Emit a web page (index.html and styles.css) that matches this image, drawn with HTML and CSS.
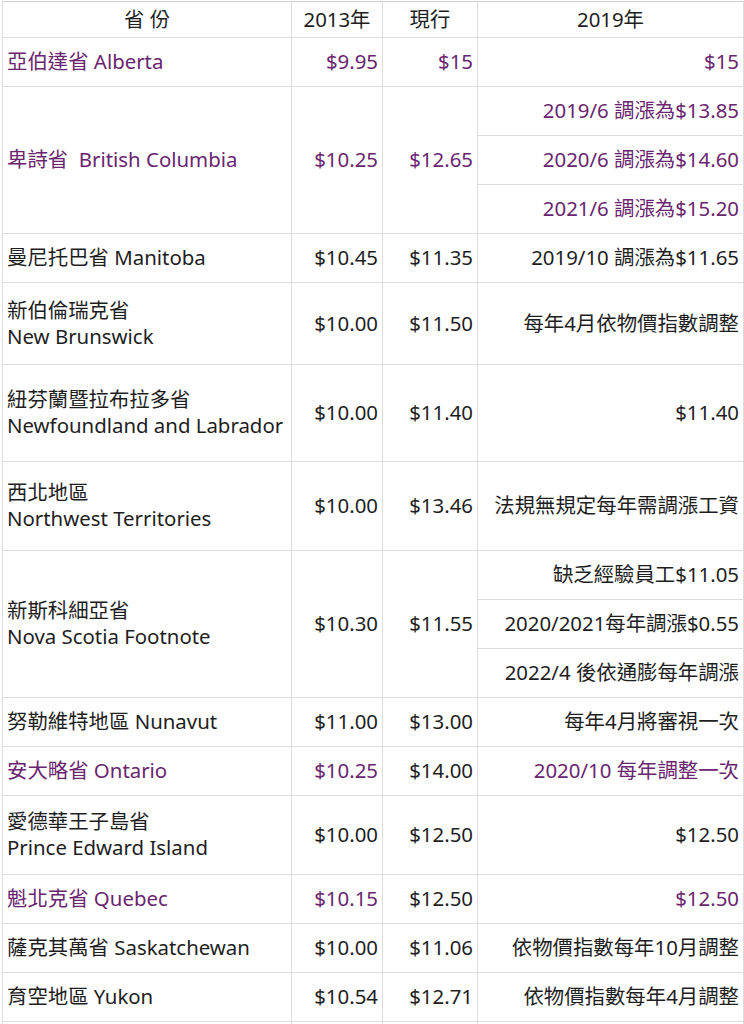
FILE: index.html
```html
<!DOCTYPE html>
<html lang="zh-Hant">
<head>
<meta charset="utf-8">
<link rel="stylesheet" href="styles.css">
</head>
<body>
<table class="wage">
  <colgroup>
    <col class="c1"><col class="c2"><col class="c3"><col class="c4">
  </colgroup>
  <tr class="head">
    <th>省 份</th><th>2013年</th><th>現行</th><th>2019年</th>
  </tr>
  <tr class="r49 p">
    <td class="name">亞伯達省 Alberta</td><td class="num">$9.95</td><td class="num">$15</td><td class="num">$15</td>
  </tr>
  <tr class="r49 p">
    <td class="name" rowspan="3">卑詩省&nbsp; British Columbia</td><td class="num" rowspan="3">$10.25</td><td class="num" rowspan="3">$12.65</td><td class="num">2019/6 調漲為$13.85</td>
  </tr>
  <tr class="r49 p"><td class="num">2020/6 調漲為$14.60</td></tr>
  <tr class="r49 p"><td class="num">2021/6 調漲為$15.20</td></tr>
  <tr class="r49">
    <td class="name">曼尼托巴省 Manitoba</td><td class="num">$10.45</td><td class="num">$11.35</td><td class="num">2019/10 調漲為$11.65</td>
  </tr>
  <tr class="r82">
    <td class="name">新伯倫瑞克省<br>New Brunswick</td><td class="num">$10.00</td><td class="num">$11.50</td><td class="num">每年4月依物價指數調整</td>
  </tr>
  <tr class="r97">
    <td class="name">紐芬蘭暨拉布拉多省<br>Newfoundland and Labrador</td><td class="num">$10.00</td><td class="num">$11.40</td><td class="num">$11.40</td>
  </tr>
  <tr class="r89">
    <td class="name">西北地區<br>Northwest Territories</td><td class="num">$10.00</td><td class="num">$13.46</td><td class="num">法規無規定每年需調漲工資</td>
  </tr>
  <tr class="r49">
    <td class="name" rowspan="3">新斯科細亞省<br>Nova Scotia Footnote</td><td class="num" rowspan="3">$10.30</td><td class="num" rowspan="3">$11.55</td><td class="num">缺乏經驗員工$11.05</td>
  </tr>
  <tr class="r49"><td class="num">2020/2021每年調漲$0.55</td></tr>
  <tr class="r49"><td class="num">2022/4 後依通膨每年調漲</td></tr>
  <tr class="r49">
    <td class="name">努勒維特地區 Nunavut</td><td class="num">$11.00</td><td class="num">$13.00</td><td class="num">每年4月將審視一次</td>
  </tr>
  <tr class="r49">
    <td class="name purple">安大略省 Ontario</td><td class="num purple">$10.25</td><td class="num">$14.00</td><td class="num purple">2020/10 每年調整一次</td>
  </tr>
  <tr class="r79">
    <td class="name mark">愛德華王子島省<br>Prince Edward Island</td><td class="num">$10.00</td><td class="num">$12.50</td><td class="num">$12.50</td>
  </tr>
  <tr class="r49">
    <td class="name purple">魁北克省 Quebec</td><td class="num purple">$10.15</td><td class="num">$12.50</td><td class="num purple">$12.50</td>
  </tr>
  <tr class="r49">
    <td class="name">薩克其萬省 Saskatchewan</td><td class="num">$10.00</td><td class="num">$11.06</td><td class="num">依物價指數每年10月調整</td>
  </tr>
  <tr class="r49">
    <td class="name">育空地區 Yukon</td><td class="num">$10.54</td><td class="num">$12.71</td><td class="num">依物價指數每年4月調整</td>
  </tr>
  <tr class="r49">
    <td class="name"></td><td class="num"></td><td class="num"></td><td class="num"></td>
  </tr>
</table>
</body>
</html>
```

FILE: styles.css
```css
html, body {
  margin: 0;
  padding: 0;
  background: #ffffff;
}

body {
  padding: 1px 0 0 2px;
  font-family: "Noto Sans", "Noto Sans CJK TC", sans-serif;
  font-size: 20.4px;
  color: #1e1e1e;
  overflow: hidden;
}

.wage {
  border-collapse: collapse;
  table-layout: fixed;
  width: 741px;
}

.c1 { width: 289px; }
.c2 { width: 91px; }
.c3 { width: 95px; }
.c4 { width: 266px; }

.wage th,
.wage td {
  border: 1px solid #dcdcdc;
  padding: 0 4px 2px;
  vertical-align: middle;
  line-height: 26px;
  white-space: nowrap;
}

.wage th {
  font-weight: normal;
  text-align: center;
  height: 33px;
}

.head th { border-top-color: #cfcfcf; }

.name {
  text-align: left;
  padding-left: 5px;
}

.num { text-align: right; }

.r49 td { height: 46px; }
.r82 td { height: 79px; }
.r97 td { height: 94px; }
.r89 td { height: 86px; }
.r79 td { height: 76px; }

.p td,
.purple {
  color: #6a2570;
}

.mark {
  border-left: 2px solid #e8c85a;
}
```
